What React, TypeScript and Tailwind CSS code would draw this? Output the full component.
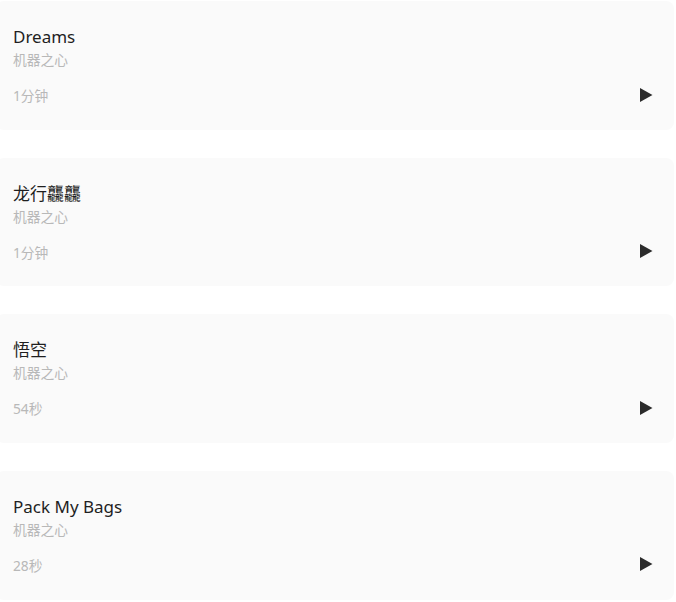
import React from 'react';

interface Track {
  title: string;
  artist: string;
  duration: string;
}

const tracks: Track[] = [
  { title: 'Dreams', artist: '机器之心', duration: '1分钟' },
  { title: '龙行龘龘', artist: '机器之心', duration: '1分钟' },
  { title: '悟空', artist: '机器之心', duration: '54秒' },
  { title: 'Pack My Bags', artist: '机器之心', duration: '28秒' },
];

const PlayIcon = () => (
  <svg width="14" height="16" viewBox="0 0 14 16" className="block">
    <path d="M1 1 L13.5 8 L1 15 Z" fill="#2b2b2b" />
  </svg>
);

const TrackCard: React.FC<{ track: Track }> = ({ track }) => (
  <div className="-ml-1 mr-[2px] h-[128.67px] rounded-lg bg-[#fafafa] pl-[17px] pr-[21px] pt-6">
    <div className="text-[17px] leading-6 text-[#1f1f1f]">{track.title}</div>
    <div className="mt-px text-[13.75px] leading-5 text-[#b8b8b8]">{track.artist}</div>
    <div className="mt-4 flex items-center justify-between">
      <span className="text-[13.75px] leading-5 text-[#b8b8b8]">{track.duration}</span>
      <span className="-mt-[3px]">
        <PlayIcon />
      </span>
    </div>
  </div>
);

export default function App() {
  return (
    <div
      className="min-h-screen w-[676px] overflow-hidden bg-white pt-px"
      style={{ fontFamily: '"Noto Sans", "Noto Sans CJK SC", sans-serif' }}
    >
      <div className="flex flex-col gap-[28px]">
        {tracks.map((t) => (
          <TrackCard key={t.title} track={t} />
        ))}
      </div>
    </div>
  );
}
